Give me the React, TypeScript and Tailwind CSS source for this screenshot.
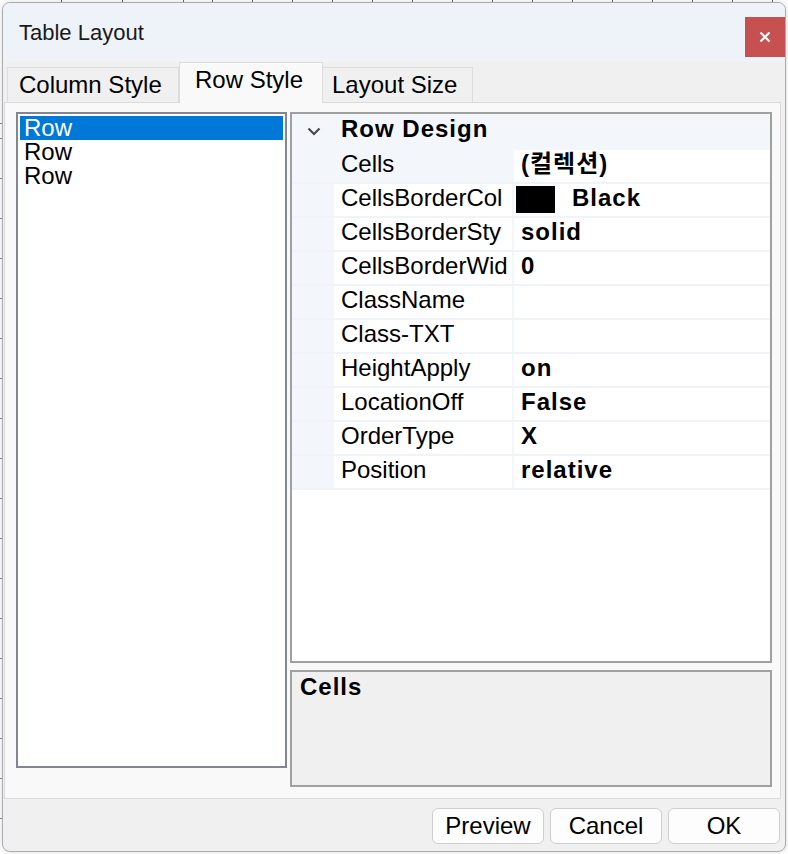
import React from "react";

const FONT = "font-['Liberation_Sans','Noto_Sans_CJK_KR',sans-serif]";

type Prop = { name: string; value?: string; swatch?: boolean; selected?: boolean };

const PROPS: Prop[] = [
  { name: "Cells", value: "(컬렉션)", selected: true },
  { name: "CellsBorderCol", value: "Black", swatch: true },
  { name: "CellsBorderSty", value: "solid" },
  { name: "CellsBorderWid", value: "0" },
  { name: "ClassName" },
  { name: "Class-TXT" },
  { name: "HeightApply", value: "on" },
  { name: "LocationOff", value: "False" },
  { name: "OrderType", value: "X" },
  { name: "Position", value: "relative" },
];

const TOP_TICKS = [61, 122, 183, 212, 252, 292, 332, 372, 412, 452, 492, 532, 572, 612, 652, 692, 732, 772];
const LEFT_TICKS = [123, 138, 178, 218, 258, 298, 338, 378, 418, 458, 498, 538, 578, 618, 658, 698, 738, 778, 818];

export default function App() {
  return (
    <div className={`relative h-[854px] w-[788px] overflow-hidden bg-white px-[2px] pt-[2px] ${FONT}`}>
      {/* bits of the editor behind the dialog */}
      {TOP_TICKS.map((x) => (
        <div key={`t${x}`} className="absolute top-0 h-[3px] w-px bg-[#6b6b6b]" style={{ left: x }} />
      ))}
      {LEFT_TICKS.map((y) => (
        <div key={`l${y}`} className="absolute left-0 h-px w-[3px] bg-[#8a8a8a]" style={{ top: y }} />
      ))}

      <div className="relative flex h-[850px] w-[784px] flex-col overflow-hidden rounded-[8px] border border-[#a9acb0] bg-[#f0f0f0] shadow-[0_0_6px_rgba(0,0,0,0.15)]">
        {/* title bar */}
        <div className="flex h-[59px] shrink-0 items-start justify-between bg-[#eef3f9]">
          <div className="pl-[16px] pt-[17px] text-[22px] leading-[26px] text-[#1a1a1a]">Table Layout</div>
          <button className="mt-[14px] flex h-[40px] w-[40px] items-center justify-center bg-[#c75050] text-white">
            <svg viewBox="0 0 12 12" className="h-[12px] w-[12px]" fill="none" stroke="currentColor" strokeWidth="2.2">
              <path d="M1.5 1.5l9 9M10.5 1.5l-9 9" />
            </svg>
          </button>
        </div>

        {/* tabs */}
        <div className="flex h-[40px] shrink-0 items-end pl-[4px]">
          <div className="h-[35px] w-[172px] border border-b-0 border-[#dcdcdc] bg-[#f0f0f0] pl-[11px] pt-[3px] text-[24px] leading-[28px] text-black">
            Column Style
          </div>
          <div className="relative z-10 -mb-px h-[41px] w-[144px] border border-b-0 border-[#dcdcdc] bg-[#f9f9f9] pl-[15px] pt-[3px] text-[24px] leading-[28px] text-black">
            Row Style
          </div>
          <div className="h-[35px] w-[150px] border border-b-0 border-l-0 border-[#dcdcdc] bg-[#f0f0f0] pl-[9px] pt-[3px] text-[24px] leading-[28px] text-black">
            Layout Size
          </div>
        </div>

        {/* tab page */}
        <div className="ml-[1px] mr-[4px] flex h-[697px] shrink-0 gap-[3px] border border-[#dadada] bg-[#f9f9f9] pl-[11px] pr-[8px] pt-[9px]">
          {/* list box */}
          <div className="flex h-[656px] w-[271px] flex-col border-2 border-[#82878f] bg-white px-[2px] pt-[2px]">
            {["Row", "Row", "Row"].map((r, i) => (
              <div
                key={i}
                className={`h-[24px] pl-[4px] text-[24px] leading-[24px] ${i === 0 ? "bg-[#0078d7] text-white" : "text-black"}`}
              >
                {r}
              </div>
            ))}
          </div>

          {/* right column */}
          <div className="flex w-[482px] flex-col gap-[7px]">
            {/* property grid */}
            <div className="flex h-[551px] flex-col border-2 border-[#a0a0a0] bg-white">
              <div className="flex h-[36px] shrink-0 bg-[#f3f6fb]">
                <div className="flex w-[42px] items-start justify-center pl-[2px] pt-[13px]">
                  <svg viewBox="0 0 16 9" className="h-[9px] w-[16px]" fill="none" stroke="#4a4a4a" strokeWidth="2.2">
                    <path d="M2.5 1.5l5.5 5.5 5.5-5.5" />
                  </svg>
                </div>
                <div className="pl-[7px] pt-[1px] text-[24px] font-bold leading-[28px] tracking-[1px] text-black">
                  Row Design
                </div>
              </div>
              {PROPS.map((p) => (
                <div key={p.name} className="flex h-[34px] shrink-0 border-b-2 border-[#f0f4f9] bg-[#f3f6fb]">
                  <div className="w-[42px]" />
                  <div
                    className={`w-[178px] overflow-hidden whitespace-nowrap pl-[7px] text-[24px] leading-[28px] text-black ${
                      p.selected ? "bg-[#f3f6fb]" : "bg-white"
                    }`}
                  >
                    {p.name}
                  </div>
                  <div className="ml-[2px] flex flex-1 items-start overflow-hidden whitespace-nowrap bg-white pl-[7px] text-[24px] font-bold leading-[28px] tracking-[1px] text-black">
                    {p.swatch && <div className="ml-[-5px] mr-[17px] mt-[2px] h-[27px] w-[39px] bg-black" />}
                    {p.value}
                  </div>
                </div>
              ))}
              <div className="flex-1 bg-white" />
            </div>

            {/* description */}
            <div className="h-[117px] border-2 border-[#a0a0a0] bg-[#f0f0f0] pl-[8px] pt-[1px] text-[24px] font-bold leading-[28px] tracking-[1px] text-black">
              Cells
            </div>
          </div>
        </div>

        {/* buttons */}
        <div className="flex flex-1 items-start justify-end gap-[6px] pr-[5px] pt-[9px]">
          {["Preview", "Cancel", "OK"].map((b) => (
            <button
              key={b}
              className="h-[36px] w-[112px] rounded-[6px] border border-[#cfcfcf] bg-[#fdfdfd] text-center text-[24px] leading-[32px] text-black"
            >
              {b}
            </button>
          ))}
        </div>
      </div>
    </div>
  );
}
